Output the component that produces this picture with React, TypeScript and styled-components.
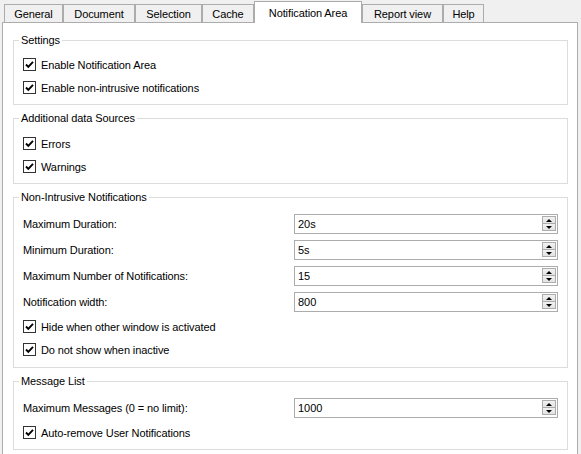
import React from 'react';
import styled, { createGlobalStyle } from 'styled-components';

const GlobalStyle = createGlobalStyle`
  html, body {
    margin: 0;
    padding: 0;
    background: #f0f0f0;
    overflow: hidden;
  }
  body {
    font-family: "Liberation Sans", Arial, sans-serif;
    font-size: 11px;
    color: #000;
  }
`;

const Window = styled.div`
  width: 581px;
  height: 454px;
  overflow: hidden;
`;

const TabBar = styled.div`
  display: flex;
  align-items: flex-end;
  height: 22px;
  padding-left: 4px;
  position: relative;
  z-index: 1;
`;

const Tab = styled.div<{ w: number; active?: boolean }>`
  box-sizing: border-box;
  width: ${(p) => p.w}px;
  height: ${(p) => (p.active ? 22 : 18)}px;
  margin-bottom: ${(p) => (p.active ? -1 : 0)}px;
  border: 1px solid #acacac;
  border-bottom: none;
  background: ${(p) => (p.active ? '#fff' : '#f0f0f0')};
  display: flex;
  align-items: center;
  justify-content: center;
  padding-top: ${(p) => (p.active ? 0 : 1)}px;
  letter-spacing: -0.1px;
  white-space: nowrap;
`;

const Panel = styled.div`
  box-sizing: border-box;
  margin-left: 2px;
  width: 576px;
  height: 440px;
  background: #fff;
  border: 1px solid #acacac;
  padding: 17px 9px 0 10px;
  display: flex;
  flex-direction: column;
  gap: 13px;
`;

const Group = styled.div<{ pt?: number; pb?: number }>`
  position: relative;
  border: 1px solid #dcdcdc;
  padding: ${(p) => p.pt ?? 13}px 9px ${(p) => p.pb ?? 4}px 9px;
`;

const Caption = styled.span`
  position: absolute;
  top: -7px;
  left: 5px;
  padding: 0 2px;
  background: #fff;
  line-height: 13px;
  letter-spacing: -0.1px;
`;

const CheckRow = styled.label`
  display: flex;
  align-items: center;
  height: 23px;
  gap: 5px;
  letter-spacing: -0.1px;
`;

const Box = styled.span`
  box-sizing: border-box;
  width: 13px;
  height: 13px;
  border: 1px solid #333;
  background: #fff;
  display: flex;
  align-items: center;
  justify-content: center;
`;

const FieldGrid = styled.div`
  display: grid;
  grid-template-columns: 271px 1fr;
  grid-auto-rows: 26px;
  align-items: center;
`;

const FieldLabel = styled.span`
  letter-spacing: -0.1px;
`;

const Spin = styled.div`
  box-sizing: border-box;
  height: 20px;
  border: 1px solid #acacac;
  background: #fff;
  display: flex;
  align-items: center;
  padding: 1px 1px 2px 3px;
`;

const SpinValue = styled.span`
  flex: 1;
`;

const SpinButtons = styled.div`
  display: flex;
  flex-direction: column;
  align-self: stretch;
  width: 14px;
`;

const SpinButton = styled.div<{ down?: boolean }>`
  box-sizing: border-box;
  flex: 1;
  border: 1px solid #acacac;
  border-top-width: ${(p) => (p.down ? 0 : 1)}px;
  background: linear-gradient(#f2f2f2, #e3e3e3);
  display: flex;
  align-items: center;
  justify-content: center;
  &:after {
    content: '';
    width: 0;
    height: 0;
    border-left: 3px solid transparent;
    border-right: 3px solid transparent;
    ${(p) => (p.down ? 'border-top: 3px solid #000;' : 'border-bottom: 3px solid #000;')}
  }
`;

const Check: React.FC<{ label: string }> = ({ label }) => (
  <CheckRow>
    <Box>
      <svg width="11" height="11" viewBox="0 0 11 11">
        <path d="M2 5.5 L4.3 7.8 L9 2.8" fill="none" stroke="#000" strokeWidth="1.9" />
      </svg>
    </Box>
    {label}
  </CheckRow>
);

const SpinBox: React.FC<{ value: string }> = ({ value }) => (
  <Spin>
    <SpinValue>{value}</SpinValue>
    <SpinButtons>
      <SpinButton />
      <SpinButton down />
    </SpinButtons>
  </Spin>
);

const tabs = [
  { name: 'General', w: 59 },
  { name: 'Document', w: 72 },
  { name: 'Selection', w: 67 },
  { name: 'Cache', w: 52 },
  { name: 'Notification Area', w: 108, active: true },
  { name: 'Report view', w: 81 },
  { name: 'Help', w: 41 },
];

const App: React.FC = () => {
  return (
    <Window>
      <GlobalStyle />
      <TabBar>
        {tabs.map((t) => (
          <Tab key={t.name} w={t.w} active={t.active}>
            {t.name}
          </Tab>
        ))}
      </TabBar>
      <Panel>
        <Group pt={12} pb={5}>
          <Caption>Settings</Caption>
          <Check label="Enable Notification Area" />
          <Check label="Enable non-intrusive notifications" />
        </Group>
        <Group pt={13} pb={5}>
          <Caption>Additional data Sources</Caption>
          <Check label="Errors" />
          <Check label="Warnings" />
        </Group>
        <Group pb={6}>
          <Caption>Non-Intrusive Notifications</Caption>
          <FieldGrid>
            <FieldLabel>Maximum Duration:</FieldLabel>
            <SpinBox value="20s" />
            <FieldLabel>Minimum Duration:</FieldLabel>
            <SpinBox value="5s" />
            <FieldLabel>Maximum Number of Notifications:</FieldLabel>
            <SpinBox value="15" />
            <FieldLabel>Notification width:</FieldLabel>
            <SpinBox value="800" />
          </FieldGrid>
          <Check label="Hide when other window is activated" />
          <Check label="Do not show when inactive" />
        </Group>
        <Group pb={5}>
          <Caption>Message List</Caption>
          <FieldGrid>
            <FieldLabel>Maximum Messages (0 = no limit):</FieldLabel>
            <SpinBox value="1000" />
          </FieldGrid>
          <Check label="Auto-remove User Notifications" />
        </Group>
      </Panel>
    </Window>
  );
};

export default App;
